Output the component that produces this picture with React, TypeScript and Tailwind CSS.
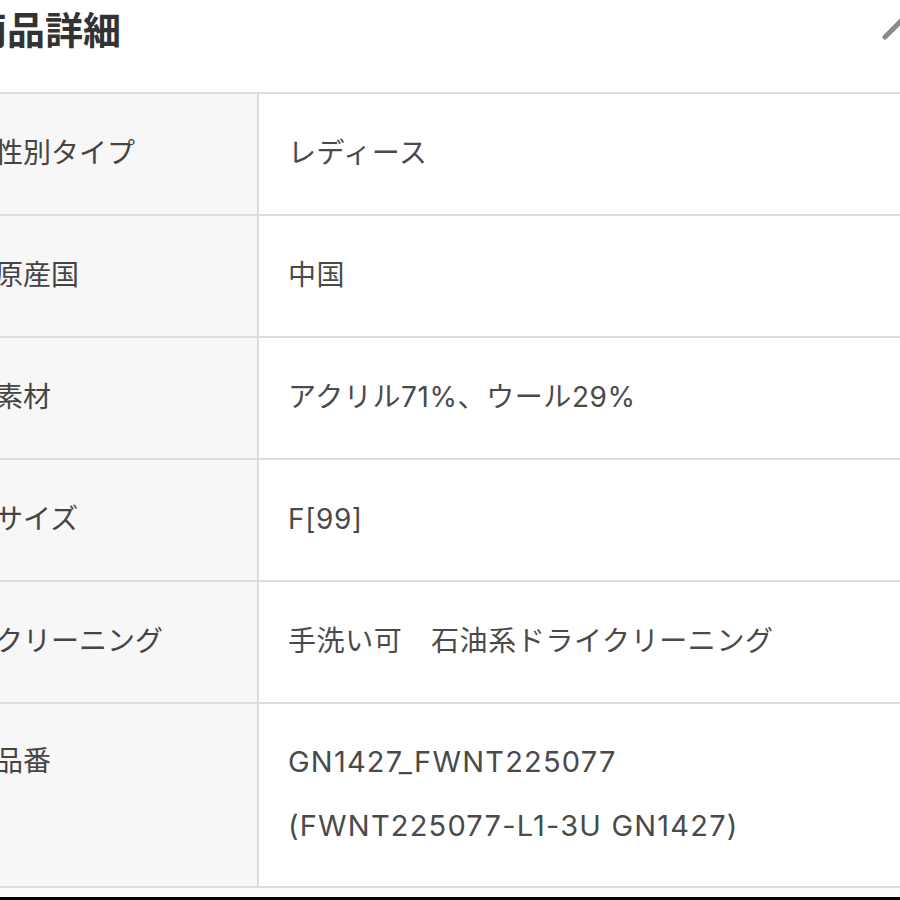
const rows: { label: string; value: string[] }[] = [
  { label: '性別タイプ', value: ['レディース'] },
  { label: '原産国', value: ['中国'] },
  { label: '素材', value: ['アクリル71%、ウール29%'] },
  { label: 'サイズ', value: ['F[99]'] },
  { label: 'クリーニング', value: ['手洗い可　石油系ドライクリーニング'] },
  { label: '品番', value: ['GN1427_FWNT225077', '(FWNT225077-L1-3U GN1427)'] },
];

export default function App() {
  return (
    <div
      className="w-[900px] h-[900px] overflow-hidden bg-white"
      style={{ fontFamily: 'Inter, "Noto Sans CJK JP", sans-serif' }}
    >
      {/* Header */}
      <div className="h-[92px] flex justify-between items-start">
        <h2 className="-ml-[31px] pt-[7px] text-[38px] leading-[46px] font-bold text-[#333]">商品詳細</h2>
        <svg className="mt-[10px] -mr-[20px] shrink-0" width="40" height="36" viewBox="0 0 40 36" fill="none">
          <polyline
            points="5,27 23,9 41,27"
            stroke="#8a8a8a"
            strokeWidth="5"
            strokeLinecap="round"
            strokeLinejoin="round"
          />
        </svg>
      </div>

      {/* Spec table */}
      <div className="border-t-2 border-[#dcdcdc]">
        {rows.map((row) => {
          const multi = row.value.length > 1;
          return (
            <div
              key={row.label}
              className={`flex border-b-2 border-[#dcdcdc] ${multi ? 'h-[184px]' : 'h-[122px]'}`}
            >
              <div
                className={`w-[259px] shrink-0 bg-[#f7f7f7] border-r-2 border-[#dcdcdc] flex ${multi ? 'items-start pt-[25px]' : 'items-center pb-[2px]'}`}
              >
                <span className="-ml-[5px] text-[28px] leading-[64px] text-[#444] whitespace-nowrap">{row.label}</span>
              </div>
              <div className="flex-1 pl-[29px] pb-[2px] flex flex-col justify-center">
                {row.value.map((v) => (
                  <span
                    key={v}
                    className={`leading-[64px] text-[#4a4a4a] whitespace-nowrap ${multi ? 'text-[29px] tracking-[1.2px]' : 'text-[28px] tracking-[0.6px]'}`}
                  >
                    {v}
                  </span>
                ))}
              </div>
            </div>
          );
        })}
      </div>

      <div className="h-[9px] bg-[#fbfbfb]"></div>
      <div className="h-[3px] bg-black"></div>
    </div>
  );
}
